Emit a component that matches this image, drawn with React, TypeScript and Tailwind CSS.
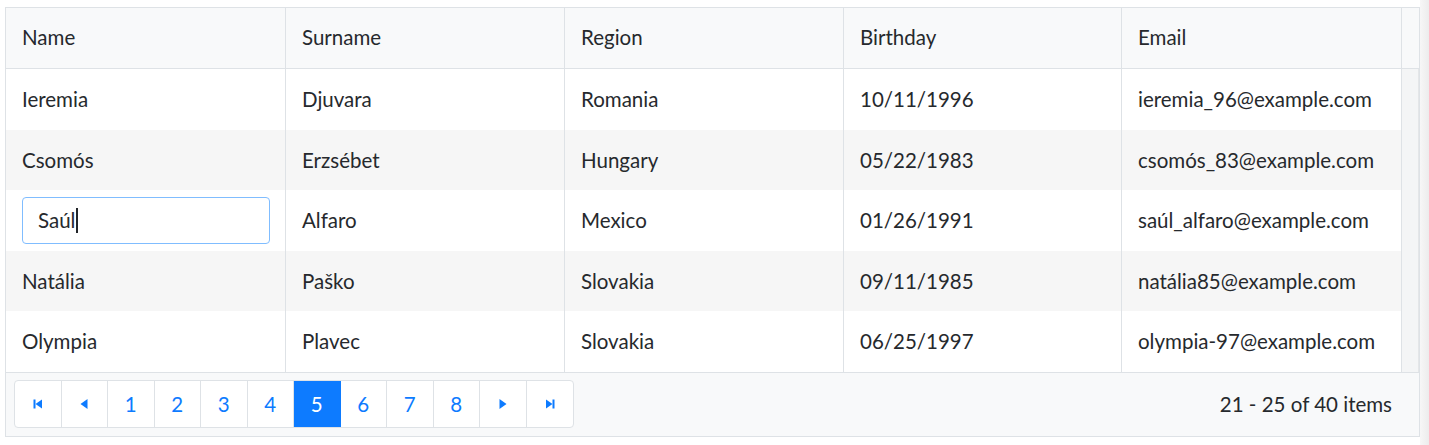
import React from "react";

const rows = [
  ["Ieremia", "Djuvara", "Romania", "10/11/1996", "ieremia_96@example.com"],
  ["Csomós", "Erzsébet", "Hungary", "05/22/1983", "csomós_83@example.com"],
  ["Saúl", "Alfaro", "Mexico", "01/26/1991", "saúl_alfaro@example.com"],
  ["Natália", "Paško", "Slovakia", "09/11/1985", "natália85@example.com"],
  ["Olympia", "Plavec", "Slovakia", "06/25/1997", "olympia-97@example.com"],
];

const widths = ["w-[280px]", "w-[279px]", "w-[279px]", "w-[278px]", "w-[280px]"];
const headers = ["Name", "Surname", "Region", "Birthday", "Email"];

function Tri({ dir, bar }: { dir: "l" | "r"; bar?: boolean }) {
  return (
    <svg width="14" height="14" viewBox="0 0 14 14" fill="#0d7bff">
      {dir === "l" ? (
        <>
          {bar && <rect x="2.5" y="2.5" width="2" height="9" />}
          <path d={bar ? "M11 2.5 L4.5 7 L11 11.5 Z" : "M10.5 2 L3.5 7 L10.5 12 Z"} />
        </>
      ) : (
        <>
          <path d={bar ? "M3 2.5 L9.5 7 L3 11.5 Z" : "M3.5 2 L10.5 7 L3.5 12 Z"} />
          {bar && <rect x="9.5" y="2.5" width="2" height="9" />}
        </>
      )}
    </svg>
  );
}

export default function App() {
  const pages = ["1", "2", "3", "4", "5", "6", "7", "8"];
  return (
    <div
      className="w-[1429px] h-[445px] bg-white flex text-[#26292d] text-[20.5px]"
      style={{ fontFamily: "Lato, 'Noto Sans', sans-serif" }}
    >
      <div className="pt-[7px] pl-[5px]">
        <div className="w-[1415px] border border-[#dee2e6] bg-white">
          {/* header */}
          <div className="flex h-[61px] border-b border-[#dee2e6] bg-[#f8f9fa]">
            {headers.map((h, i) => (
              <div
                key={h}
                className={`${widths[i]} border-r border-[#dee2e6] flex items-center pl-[16px] pb-[2px]`}
              >
                {h}
              </div>
            ))}
            <div className="flex-1" />
          </div>
          {/* body */}
          <div className="flex">
            <div className="flex flex-col">
              {rows.map((r, ri) => (
                <div
                  key={ri}
                  className={`flex h-[60.6px] ${ri % 2 === 1 ? "bg-[#f6f6f6]" : "bg-white"}`}
                >
                  {r.map((c, ci) => (
                    <div
                      key={ci}
                      className={`${widths[ci]} border-r border-[#dee2e6] flex items-center ${
                        ri === 2 && ci === 0 ? "pl-[16px] pr-[15px]" : "pl-[16px]"
                      }`}
                    >
                      {ri === 2 && ci === 0 ? (
                        <div className="w-full h-[47px] border border-[#80bdff] rounded-[4px] flex items-center pl-[15px] bg-white">
                          <span>{c}</span>
                          <span className="inline-block w-[1.5px] h-[25px] bg-[#212529] ml-[1px]" />
                        </div>
                      ) : (
                        c
                      )}
                    </div>
                  ))}
                </div>
              ))}
            </div>
            <div className="flex-1 bg-[#f4f5f6] border-r border-[#e4e6e8]" />
          </div>
          {/* pager */}
          <div className="h-[64px] border-t border-[#dee2e6] bg-[#f8f9fa] flex items-center pl-[8px] pr-[27px] justify-between">
            <div className="flex h-[48px] border border-[#dee2e6] rounded-[4px] bg-white overflow-hidden">
              <div className="w-[46.5px] flex items-center justify-center border-r border-[#dee2e6]">
                <Tri dir="l" bar />
              </div>
              <div className="w-[46.5px] flex items-center justify-center border-r border-[#dee2e6]">
                <Tri dir="l" />
              </div>
              {pages.map((p) => (
                <div
                  key={p}
                  className={`w-[46.5px] flex items-center justify-center border-r ${
                    p === "5"
                      ? "bg-[#0d7bff] text-white border-[#0d7bff]"
                      : "text-[#0d7bff] border-[#dee2e6]"
                  }`}
                >
                  {p}
                </div>
              ))}
              <div className="w-[46.5px] flex items-center justify-center border-r border-[#dee2e6]">
                <Tri dir="r" />
              </div>
              <div className="w-[46.5px] flex items-center justify-center">
                <Tri dir="r" bar />
              </div>
            </div>
            <div>21 - 25 of 40 items</div>
          </div>
        </div>
      </div>
      <div className="flex-1 bg-gradient-to-r from-[#f7f7f7] to-[#ececec]" />
    </div>
  );
}
